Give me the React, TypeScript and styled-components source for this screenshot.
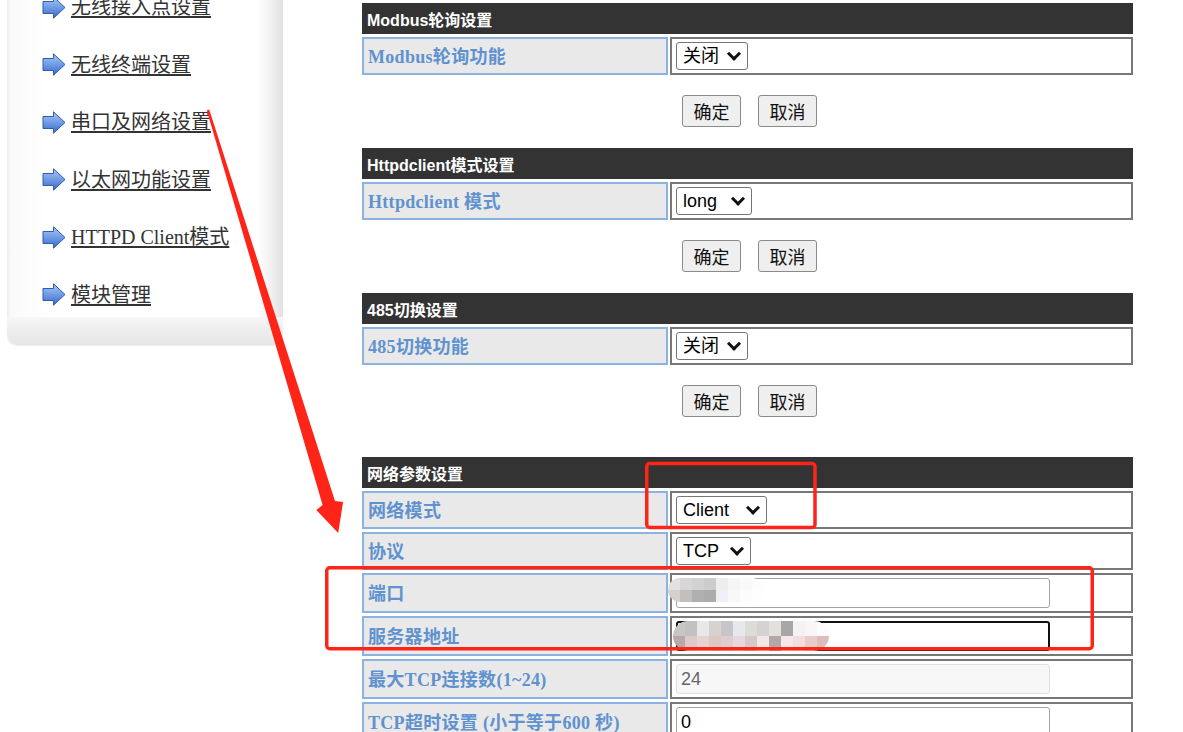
import React from 'react';
import styled, { createGlobalStyle } from 'styled-components';

const GlobalStyle = createGlobalStyle`
  html, body {
    margin: 0;
    padding: 0;
    background: #fff;
    overflow: hidden;
  }
  body {
    font-family: "Liberation Serif", "Noto Sans CJK SC", serif;
  }
`;

const Page = styled.div`
  position: relative;
  display: flex;
  align-items: flex-start;
  width: 1183px;
  height: 732px;
  overflow: hidden;
`;

// ---------- sidebar ----------

const Sidebar = styled.aside`
  flex-shrink: 0;
  width: 276px;
  margin: -5px 0 0 7px;
`;

const Menu = styled.ul`
  list-style: none;
  margin: 0;
  padding: 0 0 10.5px 35px;
  display: flex;
  flex-direction: column;
  gap: 33.5px;
  background: linear-gradient(
    to right,
    #ececec 0,
    #fafafa 4px,
    #fff 40px,
    #fff 250px,
    #f3f3f3 262px,
    #e1e1e1 276px
  );
`;

const MenuItem = styled.li`
  display: flex;
  align-items: center;
  gap: 5px;
  height: 24px;
`;

const MenuLink = styled.a`
  font-family: "Liberation Serif", "Noto Sans CJK SC", serif;
  font-size: 20px;
  line-height: 24px;
  color: #333;
  text-decoration: underline;
  text-underline-offset: 2px;
  white-space: nowrap;
  cursor: pointer;
`;

const SidebarFooter = styled.div`
  height: 28px;
  border-radius: 0 0 10px 10px;
  background: linear-gradient(to bottom, #f7f7f7 0, #efefef 40%, #e6e6e6 100%);
  box-shadow: 0 1px 1px rgba(0, 0, 0, 0.08);
`;

const ArrowIcon = () => (
  <svg width="24" height="23" viewBox="0 0 24 23">
    <defs>
      <linearGradient id="menuArrow" x1="0" y1="0" x2="0" y2="1">
        <stop offset="0" stopColor="#a8c5f3" />
        <stop offset="0.45" stopColor="#76a0e6" />
        <stop offset="1" stopColor="#3a68c9" />
      </linearGradient>
    </defs>
    <path
      d="M1 5.5 H11.5 V0.8 L23 11.5 L11.5 22.2 V17.5 H1 Z"
      fill="url(#menuArrow)"
      stroke="#2f5cb6"
      strokeWidth="1"
      strokeLinejoin="round"
    />
  </svg>
);

// ---------- settings tables ----------

const Main = styled.main`
  flex-shrink: 0;
  width: 771px;
  margin-left: 79px;
  padding-top: 3px;
`;

const Table = styled.div`
  display: grid;
  grid-template-columns: 306px 463px;
  column-gap: 2px;
  row-gap: 3px;
`;

const Header = styled.div`
  grid-column: 1 / -1;
  height: 31px;
  display: flex;
  align-items: center;
  padding-left: 5px;
  background: #333;
  color: #fff;
  font: bold 16px "Liberation Sans", "Noto Sans CJK SC", sans-serif;
`;

const Label = styled.div`
  box-sizing: border-box;
  display: flex;
  align-items: center;
  padding: 0 0 2px 4px;
  background: #e9e9e9;
  border: 2px solid #8cb2e1;
  color: #5f92cf;
  font: bold 18px "Liberation Serif", "Noto Sans CJK SC", serif;
  letter-spacing: 0.3px;
  white-space: nowrap;
`;

const Value = styled.div`
  position: relative;
  box-sizing: border-box;
  display: flex;
  align-items: center;
  padding: 3px 4px;
  border: 2px solid #777;
`;

const SelectWrap = styled.span`
  position: relative;
  display: inline-flex;

  &::after {
    content: '';
    position: absolute;
    right: 9px;
    top: 50%;
    width: 7px;
    height: 7px;
    border-right: 3px solid #111;
    border-bottom: 3px solid #111;
    transform: translateY(-72%) rotate(45deg);
    pointer-events: none;
  }
`;

const Select = styled.select<{ $width: number }>`
  box-sizing: border-box;
  appearance: none;
  width: ${(p) => p.$width}px;
  height: 28px;
  margin: 0;
  padding: 0 0 0 6px;
  font: 18px "Liberation Sans", "Noto Sans CJK SC", sans-serif;
  color: #000;
  background: #fff;
  border: 1px solid #767676;
  border-radius: 3px;
  outline: none;
`;

const TextInput = styled.input<{ $focused?: boolean }>`
  box-sizing: border-box;
  width: 374px;
  height: 30px;
  margin: 0;
  padding: 0 4px;
  font: 18px "Liberation Sans", "Noto Sans CJK SC", sans-serif;
  color: #000;
  background: #fff;
  border: ${(p) => (p.$focused ? '2px solid #111' : '1px solid #a2a2a2')};
  border-radius: 3px;
  outline: none;

  &:disabled {
    background: #f7f7f7;
    border-color: #e0e0e0;
    color: #666;
  }
`;

const ButtonBar = styled.div`
  display: flex;
  justify-content: center;
  gap: 17px;
  padding: 20px 0 21px 4px;
`;

const Button = styled.button`
  width: 59px;
  height: 32px;
  padding: 0;
  font: 18px "Noto Sans CJK SC", sans-serif;
  color: #111;
  background: #efefef;
  border: 1px solid #8a8a8a;
  border-radius: 3px;
  cursor: pointer;
`;

const Spacer = styled.div`
  height: 19px;
`;

// pixelated blur over the hidden values
const Mosaic = styled.div<{ $left: number; $top: number; $cols: number; $cell: number; $row: number }>`
  position: absolute;
  left: ${(p) => p.$left}px;
  top: ${(p) => p.$top}px;
  display: grid;
  grid-template-columns: repeat(${(p) => p.$cols}, ${(p) => p.$cell}px);
  grid-auto-rows: ${(p) => p.$row}px;
  border-radius: ${(p) => p.$row}px;
  overflow: hidden;
  filter: blur(0.6px);
`;

const Tile = styled.span<{ $c: string }>`
  background: ${(p) => p.$c};
`;

// red markup drawn over the page
const Annotations = styled.svg`
  position: absolute;
  left: 0;
  top: 0;
  pointer-events: none;
`;

const menu = ['无线接入点设置', '无线终端设置', '串口及网络设置', '以太网功能设置', 'HTTPD Client模式', '模块管理'];

const portTiles = [
  ['#e2e0e0', '#d8d6d6', '#d2d2d2', '#cccccc', '#eeeeee', '#f6f6f6', '#fafafa', '#fdfdfd'],
  ['#d4d0ce', '#c2c0be', '#b2b0ae', '#aeacaa', '#eef0f6', '#f8f8f8', '#fcfcfc', '#fefefe'],
];

const hostTiles = [
  ['#c9c5c5', '#c2c0c0', '#e6e8ea', '#d8d2ce', '#c6c6ca', '#e6e8ec', '#dcdcd6', '#d6d2d4', '#e2e0dc', '#a8a6a6', '#f4f2f2', '#faf6f6', '#fdfbfb'],
  ['#bba8a8', '#dccaca', '#e6d2d0', '#dcc8c4', '#e0ccd0', '#e6d8dc', '#d6c8c8', '#f2e6e6', '#b2a8a8', '#f6e8e8', '#f2dede', '#e8cccc', '#dcbcbc'],
];

const MosaicBlock = ({ tiles, left, top, cell, row }: { tiles: string[][]; left: number; top: number; cell: number; row: number }) => (
  <Mosaic $left={left} $top={top} $cols={tiles[0].length} $cell={cell} $row={row}>
    {tiles.flat().map((c, i) => (
      <Tile key={i} $c={c} />
    ))}
  </Mosaic>
);

const Buttons = () => (
  <ButtonBar>
    <Button>确定</Button>
    <Button>取消</Button>
  </ButtonBar>
);

const Dropdown = ({ width, value, options }: { width: number; value: string; options: string[] }) => (
  <SelectWrap>
    <Select $width={width} defaultValue={value}>
      {options.map((o) => (
        <option key={o} value={o}>
          {o}
        </option>
      ))}
    </Select>
  </SelectWrap>
);

const App = () => {
  return (
    <Page>
      <GlobalStyle />

      <Sidebar>
        <Menu>
          {menu.map((m) => (
            <MenuItem key={m}>
              <ArrowIcon />
              <MenuLink>{m}</MenuLink>
            </MenuItem>
          ))}
        </Menu>
        <SidebarFooter />
      </Sidebar>

      <Main>
        <Table>
          <Header>Modbus轮询设置</Header>
          <Label>Modbus轮询功能</Label>
          <Value>
            <Dropdown width={72} value="关闭" options={['关闭', '开启']} />
          </Value>
        </Table>
        <Buttons />

        <Table>
          <Header>Httpdclient模式设置</Header>
          <Label>Httpdclient 模式</Label>
          <Value>
            <Dropdown width={76} value="long" options={['long', 'short']} />
          </Value>
        </Table>
        <Buttons />

        <Table>
          <Header>485切换设置</Header>
          <Label>485切换功能</Label>
          <Value>
            <Dropdown width={72} value="关闭" options={['关闭', '开启']} />
          </Value>
        </Table>
        <Buttons />
        <Spacer />

        <Table>
          <Header>网络参数设置</Header>
          <Label>网络模式</Label>
          <Value>
            <Dropdown width={91} value="Client" options={['Client', 'Server']} />
          </Value>

          <Label>协议</Label>
          <Value>
            <Dropdown width={75} value="TCP" options={['TCP', 'UDP']} />
          </Value>

          <Label>端口</Label>
          <Value>
            <TextInput type="text" defaultValue="" />
            <MosaicBlock tiles={portTiles} left={-4} top={3} cell={12} row={12} />
          </Value>

          <Label>服务器地址</Label>
          <Value>
            <TextInput type="text" defaultValue="" $focused />
            <MosaicBlock tiles={hostTiles} left={1} top={3} cell={12} row={15} />
          </Value>

          <Label>最大TCP连接数(1~24)</Label>
          <Value>
            <TextInput type="text" defaultValue="24" disabled />
          </Value>

          <Label>TCP超时设置 (小于等于600 秒)</Label>
          <Value>
            <TextInput type="text" defaultValue="0" />
          </Value>
        </Table>
      </Main>

      <Annotations width="1183" height="732" viewBox="0 0 1183 732">
        <rect x="646.75" y="463.5" width="168.25" height="64" rx="3" fill="none" stroke="#ff2418" strokeWidth="3.5" />
        <rect x="326.75" y="567.75" width="765.5" height="81" rx="3" fill="none" stroke="#ff2418" strokeWidth="3.5" />
        <polygon
          points="209.2,109.6 335,501.1 343.1,501.9 338.2,533 316.3,510.1 322.6,504.9 206.8,110.4"
          fill="#ff2418"
        />
      </Annotations>
    </Page>
  );
};

export default App;
